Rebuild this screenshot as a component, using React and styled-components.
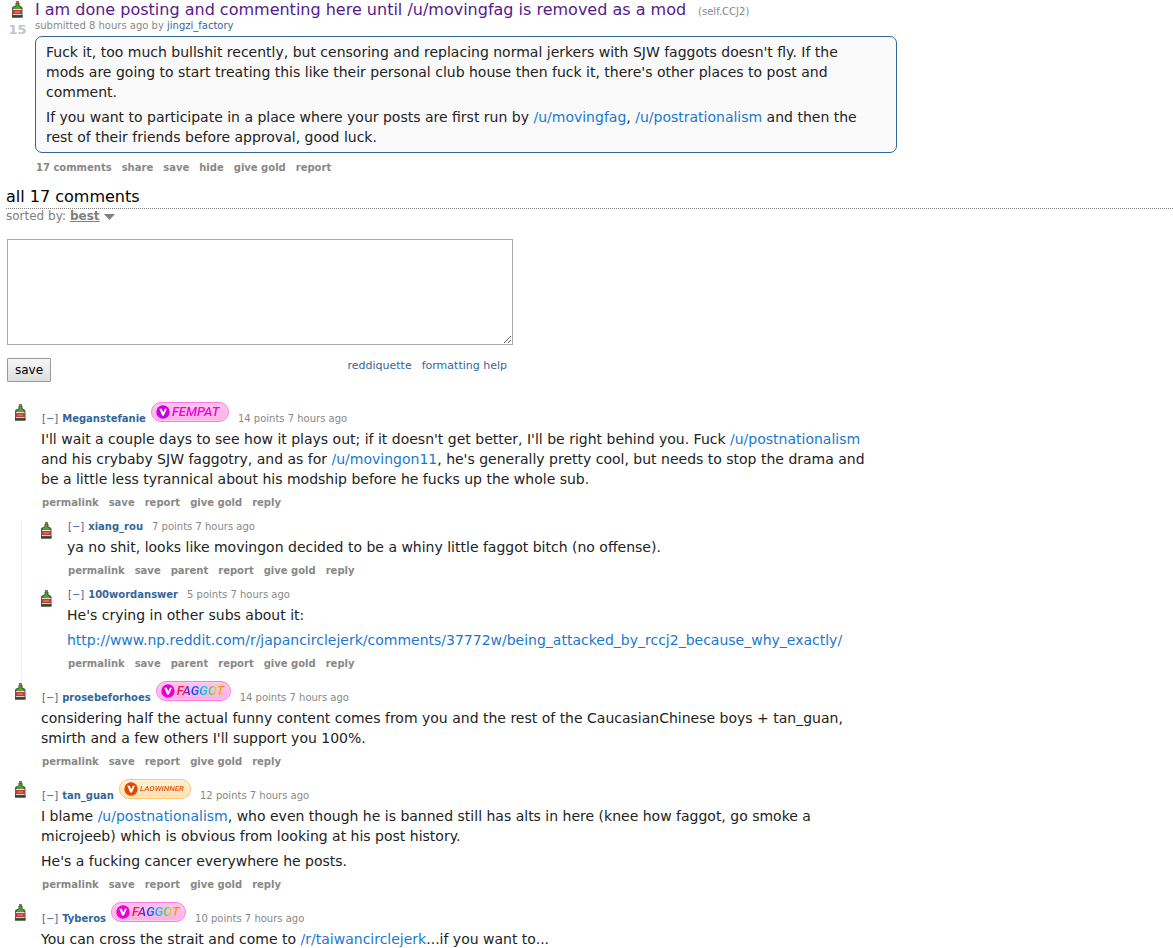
import React, { useState } from "react";
import styled, { createGlobalStyle } from "styled-components";

const GlobalStyle = createGlobalStyle`
  body {
    margin: 0;
    background: #fff;
    font-family: "DejaVu Sans", sans-serif;
    font-size: 10px;
    color: #222;
  }
  a {
    text-decoration: none;
    color: #369;
  }
  p {
    margin: 0;
  }
`;

const Page = styled.main`
  display: flex;
  flex-direction: column;
`;
const Post = styled.article`
  display: flex;
`;
const VoteColumn = styled.div`
  width: 35px;
  flex-shrink: 0;
  display: flex;
  flex-direction: column;
  align-items: center;
  gap: 4px;
  padding-top: 1px;
  box-sizing: border-box;
`;
const VoteButton = styled.button`
  display: block;
  padding: 0;
  border: 0;
  background: none;
  height: 17px;
  cursor: pointer;
`;
const Score = styled.span`
  font-size: 13px;
  line-height: 15px;
  font-weight: bold;
  color: #c6c6c6;
`;
const PostBody = styled.div`
  flex: 1;
  min-width: 0;
`;
const Title = styled.h1`
  margin: 0;
  font-size: 16px;
  line-height: 19px;
  font-weight: normal;
  > a {
    color: #551a8b;
    margin-right: 12px;
  }
`;
const Domain = styled.span`
  font-size: 10px;
  line-height: 10px;
  color: #888;
`;
const Submitted = styled.p`
  line-height: 13px;
  color: #888;
  margin-bottom: 4px;
`;
const Markdown = styled.div`
  max-width: 840px;
  font-size: 14px;
  line-height: 20px;
  display: flex;
  flex-direction: column;
  gap: 5px;
  a {
    color: #1a78cf;
  }
`;
const PostText = styled(Markdown)`
  max-width: 830px;
  padding: 5px 20px 5px 10px;
  border: 1px solid #369;
  border-radius: 7px;
  background: #fafafa;
`;
const Actions = styled.nav`
  display: flex;
  gap: 10px;
  padding: 6px 1px 10px;
  line-height: 15px;
  > a {
    color: #888;
    font-weight: bold;
  }
`;
const PostActions = styled(Actions)`
  padding: 7px 1px 12px;
`;
const PanelTitle = styled.h2`
  margin: 0 0 0 6px;
  padding-bottom: 1px;
  border-bottom: 1px dotted #808080;
  font-size: 16px;
  line-height: 20px;
  font-weight: normal;
  color: #000;
`;
const SortRow = styled.div`
  display: flex;
  align-items: center;
  gap: 4px;
  margin: 0 0 15px 6px;
  font-size: 12px;
  line-height: 15px;
  color: #808080;
`;
const SortButton = styled.button`
  display: flex;
  align-items: center;
  gap: 4px;
  padding: 0;
  border: 0;
  background: none;
  font: inherit;
  line-height: 15px;
  font-weight: bold;
  color: #808080;
  > span {
    text-decoration: underline;
  }
`;
const ReplyForm = styled.form`
  max-width: 506px;
  margin: 0 7px 20px;
`;
const ReplyBox = styled.textarea`
  display: block;
  width: 100%;
  height: 106px;
  box-sizing: border-box;
  margin: 0;
  padding: 2px;
  border: 1px solid #a9a9a9;
  border-radius: 0;
  font-size: 14px;
`;
const FormBottom = styled.div`
  display: flex;
  justify-content: space-between;
  align-items: flex-start;
  padding: 13px 6px 0 0;
`;
const SaveButton = styled.button`
  height: 24px;
  padding: 0 7px;
  border: 1px solid #999;
  border-radius: 1px;
  background: linear-gradient(#f6f6f6, #dedede);
  font-family: inherit;
  font-size: 12px;
  color: #000;
`;
const HelpLinks = styled.div`
  display: flex;
  gap: 10px;
  font-size: 11px;
  line-height: 15px;
`;
const CommentList = styled.section`
  padding-left: 8px;
`;
const CommentRow = styled.article`
  display: flex;
`;
const CommentVote = styled.div`
  width: 33px;
  flex-shrink: 0;
  padding: 2px 0 0 7px;
  box-sizing: border-box;
`;
const CommentBody = styled.div`
  flex: 1;
  min-width: 0;
`;
const Children = styled.div`
  margin-left: 13px;
  padding-left: 12px;
  border-left: 1px dotted #ddf;
`;
const Tagline = styled.header`
  display: flex;
  align-items: flex-end;
  padding: 0 0 4px 1px;
  line-height: 13px;
  color: #888;
`;
const Collapse = styled.button`
  padding: 0;
  border: 0;
  background: none;
  font: inherit;
  line-height: 13px;
  color: #369;
  margin-right: 4px;
  cursor: pointer;
`;
const Author = styled.a`
  font-weight: bold;
`;
const Points = styled.span`
  margin-left: 9px;
`;
const Flair = styled.span`
  display: flex;
  align-items: center;
  gap: 2px;
  box-sizing: border-box;
  width: ${(p) => p.$width}px;
  height: 20px;
  margin: 0 0 3px 5px;
  padding-left: 4px;
  border: 1px solid ${(p) => p.$border};
  border-radius: 10px;
  background: ${(p) => p.$background};
  box-shadow: inset 0 0 0 1px ${(p) => p.$glow};
  > svg {
    flex-shrink: 0;
  }
`;
const FlairText = styled.span`
  font-family: Roboto, "Liberation Sans", sans-serif;
  font-style: italic;
  font-weight: 500;
  font-size: ${(p) => p.$size}px;
  line-height: 18px;
  color: transparent;
  background: ${(p) => p.$fill};
  background-clip: text;
  padding-right: 1px;
`;

const pink = {
  border: "#fa7be0",
  background: "linear-gradient(#ffc4ee, #ffb0e4)",
  glow: "#ffcdf1",
};
const flairs = {
  fempat: {
    ...pink,
    label: "FEMPAT",
    width: 78,
    size: 13,
    badge: "#c800e0",
    fill: "linear-gradient(#ff00e0, #e600c8)",
  },
  rainbow: {
    ...pink,
    label: "FAGGOT",
    width: 75,
    size: 13,
    badge: "#e600d2",
    fill: "linear-gradient(90deg, #ff0060 0%, #ff2040 12%, #3020ff 26%, #0060ff 40%, #00c8f0 55%, #20e060 70%, #e0e000 82%, #ff8000 96%)",
  },
  orange: {
    label: "LAOWINNER",
    width: 72,
    size: 8,
    border: "#ffc070",
    background: "linear-gradient(#fff0d0, #ffe0b0)",
    glow: "#fff2da",
    badge: "#e04800",
    fill: "linear-gradient(#f07010, #c83000)",
  },
};

const comments = [
  {
    author: "Meganstefanie",
    flair: "fempat",
    points: 14,
    text: [
      <>
        I'll wait a couple days to see how it plays out; if it doesn't get
        better, I'll be right behind you. Fuck{" "}
        <a href="#user">/u/postnationalism</a> and his crybaby SJW faggotry, and
        as for <a href="#user">/u/movingon11</a>, he's generally pretty cool,
        but needs to stop the drama and be a little less tyrannical about his
        modship before he fucks up the whole sub.
      </>,
    ],
    replies: [
      {
        author: "xiang_rou",
        points: 7,
        text: [
          "ya no shit, looks like movingon decided to be a whiny little faggot bitch (no offense).",
        ],
      },
      {
        author: "100wordanswer",
        points: 5,
        text: [
          "He's crying in other subs about it:",
          <a href="#thread">
            http://www.np.reddit.com/r/japancirclejerk/comments/37772w/being_attacked_by_rccj2_because_why_exactly/
          </a>,
        ],
      },
    ],
  },
  {
    author: "prosebeforhoes",
    flair: "rainbow",
    points: 14,
    text: [
      "considering half the actual funny content comes from you and the rest of the CaucasianChinese boys + tan_guan, smirth and a few others I'll support you 100%.",
    ],
  },
  {
    author: "tan_guan",
    flair: "orange",
    points: 12,
    text: [
      <>
        I blame <a href="#user">/u/postnationalism</a>, who even though he is
        banned still has alts in here (knee how faggot, go smoke a microjeeb)
        which is obvious from looking at his post history.
      </>,
      "He's a fucking cancer everywhere he posts.",
    ],
  },
  {
    author: "Tyberos",
    flair: "rainbow",
    points: 10,
    text: [
      <>
        You can cross the strait and come to{" "}
        <a href="#sub">/r/taiwancirclejerk</a>...if you want to...
      </>,
    ],
  },
];

function Bottle() {
  return (
    <svg width="11" height="17" viewBox="0 0 11 17" aria-hidden="true">
      <path d="M4 0h3v2H4z" fill="#b8604a" />
      <path
        d="M3.5 2h4v2.2c0 .8 3 1 3 2.8V16.5H0V7c0-1.8 3.5-2 3.5-2.8z"
        fill="#3d6b30"
      />
      <path d="M4.5 2.5h1.6v2.4l2.4 1.6v1.8H2V6.5l2.5-1.6z" fill="#56a03c" />
      <path d="M.5 8H10v6.2H.5z" fill="#c43a3c" />
      <path d="M1 8h8.5v1H1z" fill="#eadcd4" />
      <path d="M2.5 10.5H8v1H2.5z" fill="#e8908c" />
      <path d="M1 13h8.5v1.2H1z" fill="#d9d2cc" />
      <path d="M0 14.2h10.5v2.3H0z" fill="#2c4a34" />
    </svg>
  );
}

function UserFlair({ kind }) {
  const f = flairs[kind];
  return (
    <Flair
      $width={f.width}
      $border={f.border}
      $background={f.background}
      $glow={f.glow}
    >
      <svg width="14" height="14" viewBox="0 0 14 14" aria-hidden="true">
        <circle cx="7" cy="7" r="6.7" fill={f.badge} />
        <path d="M3.3 3.8h2.4l1.6 3.6 1.6-3.6h2L7.9 10.6H6.2z" fill="#fff" />
      </svg>
      <FlairText $size={f.size} $fill={f.fill}>
        {f.label}
      </FlairText>
    </Flair>
  );
}

function Comment({ comment, nested }) {
  const [open, setOpen] = useState(true);
  const actions = ["permalink", "save", "report", "give gold", "reply"];
  if (nested) actions.splice(2, 0, "parent");
  return (
    <>
      <CommentRow>
        <CommentVote>
          <VoteButton type="button" aria-label="upvote">
            <Bottle />
          </VoteButton>
        </CommentVote>
        <CommentBody>
          <Tagline>
            <Collapse type="button" onClick={() => setOpen(!open)}>
              {open ? "[−]" : "[+]"}
            </Collapse>
            <Author href="#user">{comment.author}</Author>
            {comment.flair && <UserFlair kind={comment.flair} />}
            <Points>{comment.points} points 7 hours ago</Points>
          </Tagline>
          {open && (
            <>
              <Markdown>
                {comment.text.map((t, i) => (
                  <p key={i}>{t}</p>
                ))}
              </Markdown>
              <Actions>
                {actions.map((a) => (
                  <a key={a} href="#comment">
                    {a}
                  </a>
                ))}
              </Actions>
            </>
          )}
        </CommentBody>
      </CommentRow>
      {open && comment.replies && (
        <Children>
          {comment.replies.map((r) => (
            <Comment key={r.author} comment={r} nested />
          ))}
        </Children>
      )}
    </>
  );
}

export default function App() {
  return (
    <>
      <GlobalStyle />
      <Page>
        <Post>
          <VoteColumn>
            <VoteButton type="button" aria-label="upvote">
              <Bottle />
            </VoteButton>
            <Score>15</Score>
          </VoteColumn>
          <PostBody>
            <Title>
              <a href="#post">
                I am done posting and commenting here until /u/movingfag is
                removed as a mod
              </a>
              <Domain>(self.CCJ2)</Domain>
            </Title>
            <Submitted>
              submitted 8 hours ago by <a href="#user">jingzi_factory</a>
            </Submitted>
            <PostText>
              <p>
                Fuck it, too much bullshit recently, but censoring and replacing
                normal jerkers with SJW faggots doesn't fly. If the mods are
                going to start treating this like their personal club house then
                fuck it, there's other places to post and comment.
              </p>
              <p>
                If you want to participate in a place where your posts are first
                run by <a href="#user">/u/movingfag</a>,{" "}
                <a href="#user">/u/postrationalism</a> and then the rest of
                their friends before approval, good luck.
              </p>
            </PostText>
            <PostActions>
              {["17 comments", "share", "save", "hide", "give gold", "report"].map(
                (a) => (
                  <a key={a} href="#post">
                    {a}
                  </a>
                )
              )}
            </PostActions>
          </PostBody>
        </Post>
        <PanelTitle>all 17 comments</PanelTitle>
        <SortRow>
          sorted by:
          <SortButton type="button">
            <span>best</span>
            <svg width="11" height="6" viewBox="0 0 11 6" aria-hidden="true">
              <path d="M0 0h11L5.5 6z" fill="#808080" />
            </svg>
          </SortButton>
        </SortRow>
        <ReplyForm onSubmit={(e) => e.preventDefault()}>
          <ReplyBox aria-label="comment" />
          <FormBottom>
            <SaveButton type="submit">save</SaveButton>
            <HelpLinks>
              <a href="#reddiquette">reddiquette</a>
              <a href="#help">formatting help</a>
            </HelpLinks>
          </FormBottom>
        </ReplyForm>
        <CommentList>
          {comments.map((c) => (
            <Comment key={c.author} comment={c} />
          ))}
        </CommentList>
      </Page>
    </>
  );
}
